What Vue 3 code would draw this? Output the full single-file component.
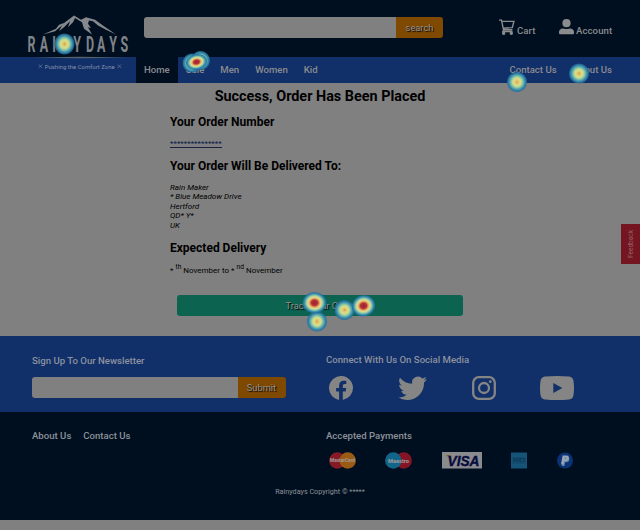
<script setup>
const mainLinks = ['Home', 'Sale', 'Men', 'Women', 'Kid']
const address = ['Rain Maker', '* Blue Meadow Drive', 'Hertford', 'QD* Y*', 'UK']
// Click clusters: position, radii, rotation and whether the core is hot
const spots = [
  { x: 64.5, y: 44, rx: 10.5, ry: 11 },
  { x: 192, y: 63, rx: 10, ry: 10 },
  { x: 200.5, y: 60.5, rx: 10, ry: 10 },
  { x: 196.5, y: 62, rx: 11, ry: 8, rot: -12, hot: true },
  { x: 517, y: 82, rx: 10.5, ry: 10.5 },
  { x: 579, y: 73.5, rx: 10.5, ry: 10.5 },
  { x: 317, y: 321.5, rx: 10.5, ry: 10.5 },
  { x: 344.5, y: 310, rx: 10.5, ry: 10.5 },
  { x: 314.5, y: 302.8, rx: 12.5, ry: 11, hot: true },
  { x: 363.5, y: 305.8, rx: 12.2, ry: 11, rot: -14, hot: true }
]
</script>

<template>
  <div class="page">
    <header>
      <div class="top">
        <form class="field search" @submit.prevent>
          <input aria-label="search" /><button>search</button>
        </form>
        <div class="user">
          <a class="cart">
            <svg width="16" height="16" viewBox="0 0 16 16" fill="none" stroke="#8b8c8d" stroke-width="1.4">
              <path d="M0 1.1h2.5l2 9.7h8.9M3 2.4h11.9l-1.6 6.2-9 .6M4.8 10.8l-.9 1.7h9.6" />
              <circle cx="4.7" cy="14.2" r="1" fill="#8b8c8d" /><circle cx="12.3" cy="14.2" r="1" fill="#8b8c8d" />
            </svg>
            <span>Cart</span>
          </a>
          <a class="account">
            <svg width="15" height="16" viewBox="0 0 15 16" fill="#8b8c8d">
              <circle cx="7.5" cy="4.2" r="4.1" /><path d="M0 14.2v-1.1c0-2.2 1.8-3.6 4-3.6h.5c1.8.8 4.2.8 6 0h.5c2.2 0 4 1.4 4 3.6v1.1q0 1.1-1.2 1.1H1.2Q0 15.3 0 14.2z" />
            </svg>
            <span>Account</span>
          </a>
        </div>
      </div>
      <nav>
        <a v-for="(l, i) in mainLinks" :key="l" :class="{ active: i === 0 }">{{ l }}</a>
        <span class="right"><a>Contact Us</a><a>About Us</a></span>
      </nav>
      <svg class="logo" width="110" height="62" viewBox="0 0 110 62">
        <path transform="translate(0 .7) scale(1 .83)" d="M18 24 31 17 34 12 39 10 49 1 56 6 61 3 70 6 79 14 91 24 81 18 73 13 68 8 64 7 63 11 66 16 63 15 67 24 59 17 57 9 50 4 48 9 43 15 45 8 39 15 34 20 37 13 30 20Z" fill="#85898d" />
        <text class="brand" transform="scale(.58 1)" x="4.2 25.4 47 58.4 83 105 124.2 145.2 164.6" y="38">RAINYDAYS</text>
        <path d="M7 43.5 55 42.8 103 43.5 55 44.2Z" fill="#59626c" />
        <path d="m13.7 50.5 3.5 3.5m0-3.5-3.5 3.5M92.7 50.5l3.5 3.5m0-3.5-3.5 3.5" stroke="#6b7b9b" stroke-width=".7" />
        <text class="tag" x="19.7" y="54.5" textLength="70" lengthAdjust="spacingAndGlyphs">Pushing the Comfort Zone</text>
      </svg>
    </header>

    <main>
      <h1>Success, Order Has Been Placed</h1>
      <section>
        <h2>Your Order Number</h2>
        <a class="number">***************</a>
        <h2 class="deliver">Your Order Will Be Delivered To:</h2>
        <address><div v-for="a in address" :key="a">{{ a }}</div></address>
        <h2 class="expected">Expected Delivery</h2>
        <p>* <sup>th</sup> November to * <sup>nd</sup> November</p>
      </section>
      <button class="track">Track Your Order</button>
    </main>

    <section class="connect">
      <div class="left">
        <h3>Sign Up To Our Newsletter</h3>
        <form class="field news" @submit.prevent>
          <input aria-label="email" /><button>Submit</button>
        </form>
      </div>
      <div class="social">
        <h3>Connect With Us On Social Media</h3>
        <div class="icons">
          <svg width="24" height="24" viewBox="0 0 24 24"><path fill="#858585" d="M24 12a12 12 0 1 0-13.9 11.9v-8.4H7.1V12h3V9.4c0-3 1.8-4.7 4.5-4.7 1.3 0 2.7.2 2.7.2v3h-1.5c-1.5 0-2 .9-2 1.9V12h3.4l-.6 3.5h-2.8v8.4A12 12 0 0 0 24 12z" /></svg>
          <svg width="29" height="24" viewBox="0 1.8 24 20" preserveAspectRatio="none"><path fill="#858585" d="M23.95 4.57a10 10 0 0 1-2.82.77 4.96 4.96 0 0 0 2.16-2.72c-.95.55-2 .95-3.13 1.18a4.92 4.92 0 0 0-8.38 4.48A14 14 0 0 1 1.64 3.16a4.92 4.92 0 0 0 1.52 6.57 4.9 4.9 0 0 1-2.23-.61v.06c0 2.38 1.7 4.37 3.95 4.83a5 5 0 0 1-2.21.08 4.94 4.94 0 0 0 4.6 3.42A9.87 9.87 0 0 1 0 19.54a14 14 0 0 0 7.55 2.21c9.05 0 14-7.5 14-13.98 0-.21 0-.42-.02-.63a9.9 9.9 0 0 0 2.42-2.57z" /></svg>
          <svg width="24" height="24" viewBox="0 0 24 24" fill="none" stroke="#858585" stroke-width="2.3"><rect x="1.2" y="1.2" width="21.6" height="21.6" rx="5.6" /><circle cx="12" cy="12" r="5" /><circle cx="18.3" cy="5.7" r="1.4" fill="#858585" stroke="none" /></svg>
          <svg width="34" height="24" viewBox="0 0 34 24"><path fill="#858585" fill-rule="evenodd" d="M5 .5Q17-.5 29 .5 33 1 33.5 5 34.5 12 33.5 19 33 23 29 23.5 17 24.5 5 23.5 1 23 .5 19-.5 12 .5 5 1 1 5 .5ZM13.3 7v10l9-5z" /></svg>
        </div>
      </div>
    </section>

    <footer>
      <div class="cols">
        <div class="links"><a>About Us</a><a>Contact Us</a></div>
        <div class="pay">
          <h3>Accepted Payments</h3>
          <div class="cards">
            <svg width="27" height="17" viewBox="0 0 27 17"><circle cx="8.3" cy="8.5" r="8.2" fill="#861b25" /><circle cx="18.7" cy="8.5" r="8.2" fill="#9a5b14" /><text class="mark" x="1" y="10.4" textLength="25" lengthAdjust="spacingAndGlyphs">MasterCard</text></svg>
            <svg width="27" height="17" viewBox="0 0 27 17"><circle cx="18.7" cy="8.5" r="8.2" fill="#851525" /><circle cx="8.3" cy="8.5" r="8.2" fill="#11658a" /><text class="mark maestro" x="3" y="10.6" textLength="21" lengthAdjust="spacingAndGlyphs">Maestro</text></svg>
            <svg width="40" height="17" viewBox="0 0 40 17"><path fill="#8a8b8e" d="M0 0h40v16.5H0z" /><path fill="#85601b" d="m4 3 4 .1 2 6z" /><text class="visa" x="5.5" y="13.6" textLength="32" lengthAdjust="spacingAndGlyphs">VISA</text></svg>
            <svg width="16" height="17" viewBox="0 0 16 17"><path fill="#155477" d="M0 .5h16v16H0z" /><path stroke="#0b3552" fill="none" d="M1 6h14M1 11h14" stroke-width=".4" /><text class="amex" x="1.5" y="10.4" textLength="13" lengthAdjust="spacingAndGlyphs">AMEX</text></svg>
            <svg width="16" height="17" viewBox="0 0 16 17"><circle cx="8" cy="8.5" r="8" fill="#0b3275" /><path fill="#698aa8" d="M6.2 5h4.2c3 0 2.6 5.2-1 5.2H8l-.6 3.7H5.1z" /><path fill="#9aa5b4" fill-rule="evenodd" d="M5.6 3.5h4.1c3.4 0 2.7 5.4-1.2 5.4H7.1l-.6 3.6H4zm2.1 1.8-.4 2h1c1.4 0 1.8-2 .4-2z" /></svg>
          </div>
        </div>
      </div>
      <small>Rainydays Copyright © *****</small>
    </footer>

    <div class="feedback"><span>Feedback</span></div>

    <svg class="heat" width="640" height="530" viewBox="0 0 640 530">
      <defs>
        <radialGradient id="warm">
          <stop offset="0" stop-color="#d5913f" /><stop offset=".14" stop-color="#e2c76c" /><stop offset=".38" stop-color="#d3df91" /><stop offset=".56" stop-color="#85c2a1" /><stop offset=".74" stop-color="#3b91b4" /><stop offset=".9" stop-color="#24729c" stop-opacity=".85" /><stop offset="1" stop-color="#205c88" stop-opacity="0" />
        </radialGradient>
        <radialGradient id="hot">
          <stop offset="0" stop-color="#982039" /><stop offset=".26" stop-color="#b73535" /><stop offset=".38" stop-color="#e39b56" /><stop offset=".52" stop-color="#e3dd91" /><stop offset=".66" stop-color="#98cba0" /><stop offset=".8" stop-color="#3b94b4" /><stop offset=".92" stop-color="#24729c" stop-opacity=".85" /><stop offset="1" stop-color="#205c88" stop-opacity="0" />
        </radialGradient>
      </defs>
      <ellipse v-for="(s, i) in spots" :key="i" :cx="s.x" :cy="s.y" :rx="s.rx" :ry="s.ry" :fill="s.hot ? 'url(#hot)' : 'url(#warm)'" :transform="`rotate(${s.rot || 0} ${s.x} ${s.y})`" />
    </svg>
  </div>
</template>

<style>
body { margin: 0; background: #808080; }
</style>

<style scoped>
.page { position: relative; width: 640px; height: 530px; overflow: hidden; background: #808080; font-family: Roboto, sans-serif; font-size: 9.5px; color: #000; }
h1, h2, h3, p { margin: 0; }
header { position: relative; color: #8b8c8e; font-weight: 500; }
.top { box-sizing: border-box; height: 57px; background: #000f20; display: flex; padding: 17px 0 0 144px; }
.field { display: flex; height: 21px; margin: 0; }
.field input { box-sizing: border-box; border: 0; padding: 0; margin: 0; background: #808080; border-radius: 3px 0 0 3px; outline: 0; }
.field button { border: 0; padding: 0; background: #804900; color: #929292; border-radius: 0 3px 3px 0; font: 9.3px Roboto, sans-serif; text-shadow: 1px 1px 1px #000; }
.search input { width: 252px; }
.search button { width: 47px; }
.user { display: flex; margin-left: 56px; font-size: 9.6px; }
.user a { display: flex; gap: 2px; height: 20px; }
.user svg { margin-top: 2px; flex: none; }
.user span { line-height: 12px; margin-top: 8px; letter-spacing: .08px; }
.cart { width: 60px; }
nav { height: 26px; background: #112f69; display: flex; padding-left: 136px; line-height: 26px; font-size: 9.6px; }
nav a { padding: 0 8px; }
.active { background: #000f20; }
.right { margin-left: auto; padding-right: 20px; }
.logo { position: absolute; left: 25px; top: 13.5px; }
.brand { font: 700 21.5px Roboto, sans-serif; fill: #808489; }
.tag { font: 6px Roboto, sans-serif; fill: #8490a8; }
main { box-sizing: border-box; height: 253px; padding-top: 4px; }
h1 { font-size: 14.4px; line-height: 19px; text-align: center; font-weight: 700; }
main section { padding: 9px 0 0 170px; font-size: 8px; }
h2 { font-size: 12px; line-height: 14px; font-weight: 700; }
.number { display: block; width: 52px; margin-top: 10px; height: 8px; line-height: 10px; border-bottom: 1px solid #18243d; color: #061c48; }
.deliver { margin-top: 10.5px; }
address { margin-top: 10px; line-height: 9.5px; }
.expected { margin-top: 10.5px; }
main p { margin-top: 9px; line-height: 13px; }
sup { font-size: 6.7px; line-height: 0; }
.track { display: block; width: 286px; height: 21px; margin: 18px 0 0 177px; padding: 0; border: 0; border-radius: 3px; background: #0b6350; color: #929292; font: 9.3px Roboto, sans-serif; text-shadow: 1px 1px 1px #000; }
.connect { display: grid; grid-template-columns: 294px 1fr; height: 76px; padding-left: 32px; background: #112f69; color: #8c929e; }
h3 { font-size: 9.6px; line-height: 12px; font-weight: 500; }
.left { padding-top: 19px; }
.news { margin-top: 10px; }
.news input { width: 205.5px; }
.news button { width: 48px; }
.social { padding-top: 18px; }
.icons { display: flex; margin: 10px 0 0 3px; }
.icons svg { margin-right: 45px; }
.icons svg:nth-child(3) { margin-right: 44px; }
footer { height: 108px; background: #000f20; color: #8c9298; font-size: 9.6px; }
.cols { display: grid; grid-template-columns: 294px 1fr; padding: 18px 0 0 32px; }
.links { display: flex; gap: 12px; font-weight: 500; line-height: 12px; }
.cards { display: flex; margin: 10px 0 0 3px; }
.cards svg { margin-right: 29.4px; overflow: visible; }
small { display: block; text-align: center; font-size: 7.2px; line-height: 9px; margin-top: 18px; }
.mark { font: bold 5px Roboto, sans-serif; fill: #a39b9c; }
.maestro { font-size: 5.5px; }
.visa { font: italic bold 14.5px "Liberation Sans", sans-serif; fill: #080c3d; stroke: #080c3d; stroke-width: .4; }
.amex { font: bold 4.8px Roboto, sans-serif; fill: #0c3856; }
.feedback { position: absolute; left: 621px; top: 224px; width: 19px; height: 40px; background: #751522; color: #94636b; display: flex; align-items: center; justify-content: center; }
.feedback span { writing-mode: vertical-rl; transform: rotate(180deg); font-size: 6.5px; }
.heat { position: absolute; left: 0; top: 0; pointer-events: none; }
</style>
